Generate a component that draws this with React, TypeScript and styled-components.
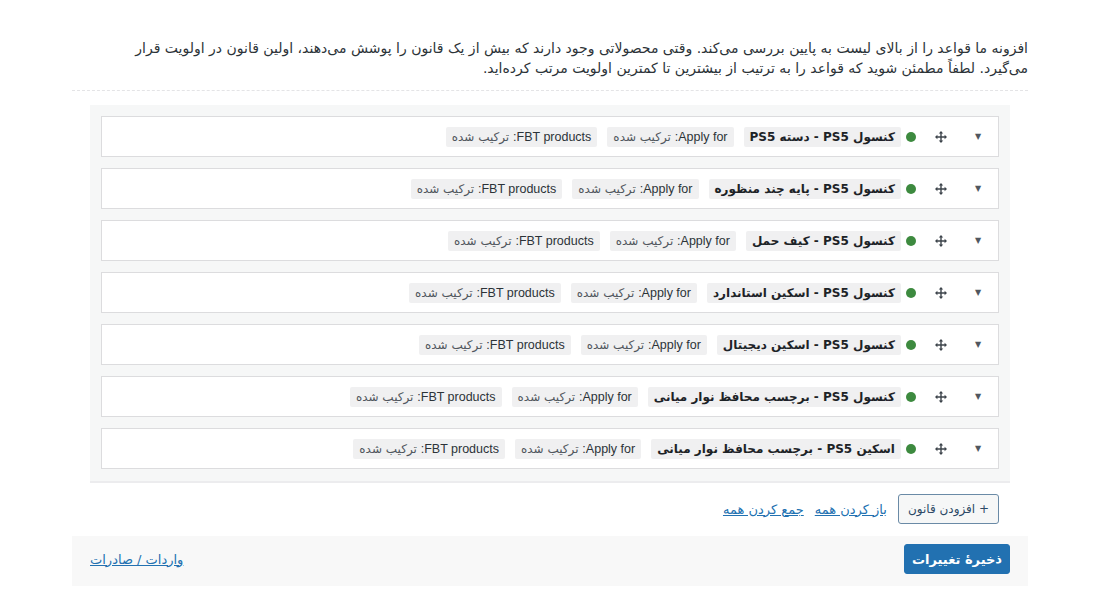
import React from "react";
import styled, { createGlobalStyle } from "styled-components";

const GlobalStyle = createGlobalStyle`
  body {
    margin: 0;
    background: #ffffff;
    font-family: "DejaVu Sans", "Noto Sans", sans-serif;
    color: #1d2327;
  }
`;

type Rule = { title: string; apply: string; fbt: string };

const rules: Rule[] = [
  { title: "کنسول PS5 - دسته PS5", apply: "ترکیب شده", fbt: "ترکیب شده" },
  { title: "کنسول PS5 - پایه چند منظوره", apply: "ترکیب شده", fbt: "ترکیب شده" },
  { title: "کنسول PS5 - کیف حمل", apply: "ترکیب شده", fbt: "ترکیب شده" },
  { title: "کنسول PS5 - اسکین استاندارد", apply: "ترکیب شده", fbt: "ترکیب شده" },
  { title: "کنسول PS5 - اسکین دیجیتال", apply: "ترکیب شده", fbt: "ترکیب شده" },
  { title: "کنسول PS5 - برچسب محافظ نوار میانی", apply: "ترکیب شده", fbt: "ترکیب شده" },
  { title: "اسکین PS5 - برچسب محافظ نوار میانی", apply: "ترکیب شده", fbt: "ترکیب شده" },
];

function MoveIcon() {
  return (
    <svg width="12" height="12" viewBox="0 0 12 12" fill="#3c434a">
      <path d="M6 0 L8.2 2.4 H6.7 V5.3 H9.6 V3.8 L12 6 L9.6 8.2 V6.7 H6.7 V9.6 H8.2 L6 12 L3.8 9.6 H5.3 V6.7 H2.4 V8.2 L0 6 L2.4 3.8 V5.3 H5.3 V2.4 H3.8 Z" />
    </svg>
  );
}

export default function App() {
  return (
    <>
      <GlobalStyle />
      <Page dir="rtl">
        <Intro>
          افزونه ما قواعد را از بالای لیست به پایین بررسی می‌کند. وقتی محصولاتی وجود دارند که بیش از یک قانون را پوشش می‌دهند، اولین قانون در اولویت قرار
          <br />
          می‌گیرد. لطفاً مطمئن شوید که قواعد را به ترتیب از بیشترین تا کمترین اولویت مرتب کرده‌اید.
        </Intro>
        <Separator />
        <RulesPanel>
          {rules.map((rule) => (
            <RuleRow key={rule.title}>
              <Caret>▼</Caret>
              <Handle>
                <MoveIcon />
              </Handle>
              <StatusDot />
              <Badge $strong>{rule.title}</Badge>
              <Badge>
                <Latin>Apply for:</Latin> {rule.apply}
              </Badge>
              <Badge>
                <Latin>FBT products:</Latin> {rule.fbt}
              </Badge>
            </RuleRow>
          ))}
        </RulesPanel>
        <Actions>
          <SecondaryButton>+ افزودن قانون</SecondaryButton>
          <TextLink href="#">باز کردن همه</TextLink>
          <TextLink href="#">جمع کردن همه</TextLink>
        </Actions>
        <Footer>
          <PrimaryButton>ذخیرهٔ تغییرات</PrimaryButton>
          <TextLink href="#">واردات / صادرات</TextLink>
        </Footer>
      </Page>
    </>
  );
}

const Page = styled.div`
  width: 956px;
  margin-left: 72px;
  padding-top: 38px;
  font-size: 13px;
`;

const Intro = styled.p`
  margin: 0;
  line-height: 20px;
  font-size: 14px;
  white-space: nowrap;
  color: #2c3338;
`;

const Separator = styled.div`
  margin: 12px 0 14px;
  border-top: 1px dashed #e4e4e6;
`;

const RulesPanel = styled.div`
  margin: 0 18px;
  padding: 11px 11px 12px;
  background: #f6f7f7;
  border-bottom: 2px solid #ececee;
  display: flex;
  flex-direction: column;
  gap: 11px;
`;

const RuleRow = styled.div`
  height: 41px;
  box-sizing: border-box;
  background: #ffffff;
  border: 1px solid #dcdcde;
  display: flex;
  align-items: center;
  padding-right: 15px;
`;

const Caret = styled.span`
  width: 10px;
  font-size: 8px;
  color: #50575e;
  text-align: center;
`;

const Handle = styled.span`
  display: flex;
  margin-right: 26px;
`;

const StatusDot = styled.span`
  width: 10px;
  height: 10px;
  border-radius: 50%;
  background: #3d8a3f;
  margin-right: 19px;
`;

const Badge = styled.span<{ $strong?: boolean }>`
  background: #f0f0f1;
  border-radius: 2px;
  padding: 2px 6px;
  line-height: 16px;
  font-size: 12px;
  font-weight: ${(p) => (p.$strong ? 700 : 400)};
  color: ${(p) => (p.$strong ? "#1d2327" : "#50575e")};
  margin-right: ${(p) => (p.$strong ? 5 : 10)}px;
`;

const Latin = styled.span`
  font-family: "Liberation Sans", "DejaVu Sans", sans-serif;
  font-size: 12.5px;
  color: #2c3338;
`;

const Actions = styled.div`
  display: flex;
  align-items: center;
  gap: 11px;
  padding: 11px 29px 0;
`;

const SecondaryButton = styled.button`
  font-family: inherit;
  font-size: 12px;
  height: 30px;
  padding: 0 9px;
  color: #2c4a66;
  background: #f6f7f7;
  border: 1px solid #6a8aa6;
  border-radius: 3px;
`;

const TextLink = styled.a`
  color: #2271b1;
  font-size: 13px;
  text-decoration: underline;
`;

const Footer = styled.div`
  margin-top: 12px;
  box-sizing: border-box;
  height: 50px;
  padding: 8px 18px 12px;
  background: #f8f8f8;
  display: flex;
  align-items: center;
  justify-content: space-between;
`;

const PrimaryButton = styled.button`
  font-family: inherit;
  font-weight: 700;
  font-size: 13px;
  height: 30px;
  padding: 0 7px;
  color: #ffffff;
  background: #2271b1;
  border: 1px solid #2271b1;
  border-radius: 3px;
`;
